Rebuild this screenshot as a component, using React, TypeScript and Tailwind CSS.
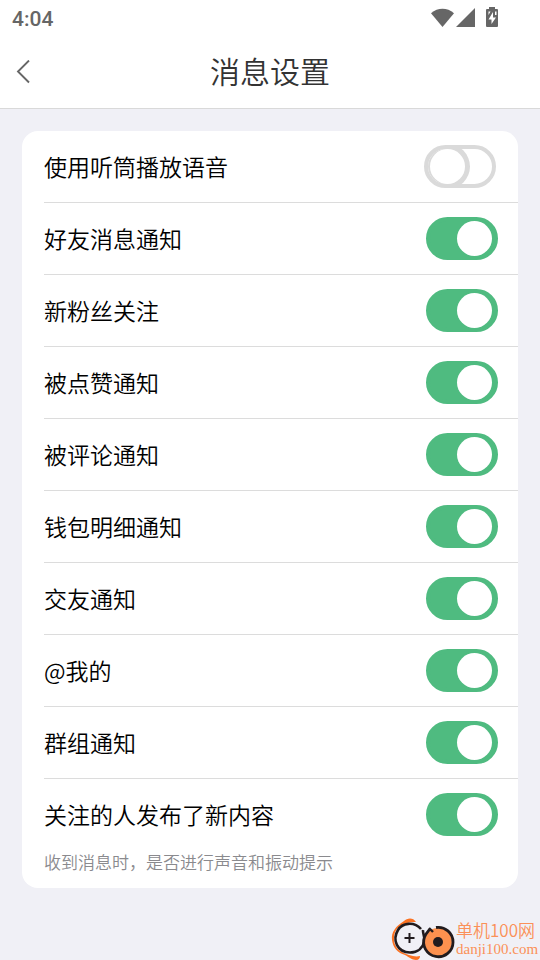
import { useState } from "react";

type Setting = { id: string; label: string; enabled: boolean };

const initialSettings: Setting[] = [
  { id: "earpiece", label: "使用听筒播放语音", enabled: false },
  { id: "friend", label: "好友消息通知", enabled: true },
  { id: "fans", label: "新粉丝关注", enabled: true },
  { id: "like", label: "被点赞通知", enabled: true },
  { id: "comment", label: "被评论通知", enabled: true },
  { id: "wallet", label: "钱包明细通知", enabled: true },
  { id: "dating", label: "交友通知", enabled: true },
  { id: "mention", label: "@我的", enabled: true },
  { id: "group", label: "群组通知", enabled: true },
  { id: "follow", label: "关注的人发布了新内容", enabled: true },
];

function StatusBar() {
  return (
    <div className="flex h-9 items-center justify-between pl-3 pr-10 text-[#666]">
      <span className="pt-0.5 font-['Roboto',sans-serif] text-[21px] font-medium leading-[34px]">4:04</span>
      <svg width="70" height="22" viewBox="0 0 70 22" fill="currentColor" aria-hidden="true">
        <path d="M1 6.200C8 .4 17 .4 24 6.200L12.500 20z" />
        <path d="M26 20 45 1V20z" />
        <path
          fillRule="evenodd"
          d="M59 0h6v2h2a1 1 0 0 1 1 1v16a1 1 0 0 1-1 1H57a1 1 0 0 1-1-1V3a1 1 0 0 1 1-1h2zM63 5 58.500 12.500h3V17L66 10.500h-3z"
        />
        <path d="M58.500 4.500V8l2-3.500zM65 4.500h1.500V8H65z" fill="#fff" />
      </svg>
    </div>
  );
}

function Header() {
  return (
    <header className="grid h-[73px] grid-cols-[60px_1fr_60px] items-center border-b border-[#d9d9d9]">
      <button type="button" aria-label="返回" className="flex h-full items-center pl-4 text-[#666]">
        <svg width="15" height="24" viewBox="0 0 15 24" fill="none" stroke="currentColor" strokeWidth="1.900">
          <path d="M13 .5 2 11.500l11 11" />
        </svg>
      </button>
      <h1 className="pb-1 text-center text-[30px] font-[350] leading-10 text-[#333]">消息设置</h1>
    </header>
  );
}

function SettingRow({ setting, onToggle }: { setting: Setting; onToggle: () => void }) {
  return (
    <li className="ml-[22px] flex h-[72px] items-center justify-between border-b border-[#dcdcdc] last:border-transparent">
      <label htmlFor={setting.id} className="pb-0.5 text-[23px] leading-8 text-black">
        {setting.label}
      </label>
      <input
        id={setting.id}
        type="checkbox"
        role="switch"
        checked={setting.enabled}
        onChange={onToggle}
        className="mr-[22px] h-[43px] w-[72px] shrink-0 cursor-pointer appearance-none overflow-hidden rounded-full border-4 border-[#dadada] bg-white before:ml-[2px] before:block before:size-[35px] before:rounded-full before:bg-white before:shadow-[0_0_0_5px_#dadada] checked:mr-5 checked:border-[#4fbb80] checked:bg-[#4fbb80] checked:before:ml-[27px] checked:before:shadow-none"
      />
    </li>
  );
}

function Watermark() {
  return (
    <div className="pointer-events-none absolute bottom-0 right-0 flex items-center text-[#fb9058]">
      <svg width="66" height="43" viewBox="0 0 66 43" fill="none" aria-hidden="true">
        <path
          d="M26 5C23 0 17 1 14 4 6 9 1 15 2 23c1 8 6 13 13 15 4 2 7 5 11 5 3 0 4-2 4-4-4 1-7 0-11-1C9 35 4 30 4 22 4 12 10 5 26 5z"
          fill="#fb7222"
        />
        <path d="M31 12C24 4 12 6 8 13 2 23 7 35 20 35.500c8 0 13-5 14.500-11.500 .8-3.500-2-7-1.500-11" stroke="#211b1e" strokeWidth="2.600" />
        <path d="M19.500 16v10M14.500 21h10" stroke="#211b1e" strokeWidth="2" />
        <circle cx="48" cy="25" r="14" fill="#fc914f" />
        <path d="M46 10.500A14.700 14.700 0 1 1 34.500 20c1-3 3-5 5-7.500" stroke="#211b1e" strokeWidth="2.800" />
        <path d="M39 11l4 4" stroke="#211b1e" strokeWidth="2.400" />
        <circle cx="48" cy="25" r="5" fill="#211b1e" />
      </svg>
      <div className="w-[84px] whitespace-nowrap">
        <p className="text-[17px] leading-[22px]">单机100网</p>
        <p className="font-['Liberation_Serif',serif] text-[15px] leading-[17px]">danji100.com</p>
      </div>
    </div>
  );
}

export default function App() {
  const [settings, setSettings] = useState(initialSettings);
  const toggle = (id: string) =>
    setSettings((items) => items.map((s) => (s.id === id ? { ...s, enabled: !s.enabled } : s)));

  return (
    <div className="relative min-h-screen bg-[#f0f0f6] font-['Noto_Sans_CJK_SC',sans-serif] font-[350]">
      <div className="bg-white">
        <StatusBar />
        <Header />
      </div>
      <main className="px-[22px] pt-[22px]">
        <section className="rounded-2xl bg-white pb-[15px]">
          <ul>
            {settings.map((s) => (
              <SettingRow key={s.id} setting={s} onToggle={() => toggle(s.id)} />
            ))}
          </ul>
          <p className="ml-[22px] text-[17px] leading-[22px] text-[#8a8a8e]">
            收到消息时，是否进行声音和振动提示
          </p>
        </section>
      </main>
      <Watermark />
    </div>
  );
}
